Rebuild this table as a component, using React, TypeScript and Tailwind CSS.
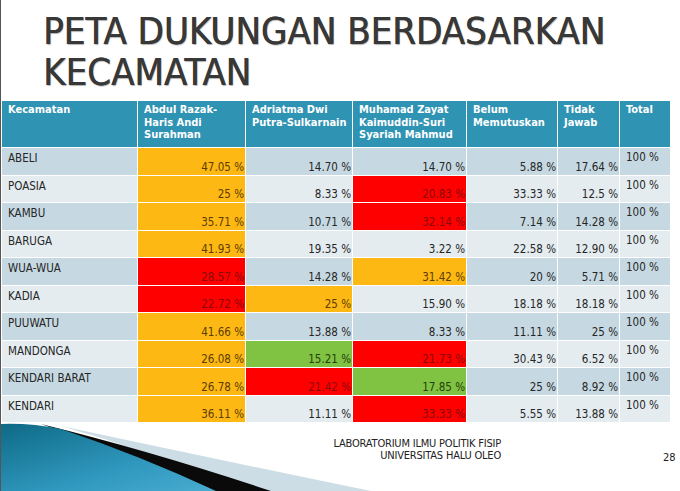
const rows: { name: string; cells: [string, string][] }[] = [
  { name: 'ABELI', cells: [['47.05 %', 'o'], ['14.70 %', ''], ['14.70 %', ''], ['5.88 %', ''], ['17.64 %', '']] },
  { name: 'POASIA', cells: [['25 %', 'o'], ['8.33 %', ''], ['20.83 %', 'r'], ['33.33 %', ''], ['12.5 %', '']] },
  { name: 'KAMBU', cells: [['35.71 %', 'o'], ['10.71 %', ''], ['32.14 %', 'r'], ['7.14 %', ''], ['14.28 %', '']] },
  { name: 'BARUGA', cells: [['41.93 %', 'o'], ['19.35 %', ''], ['3.22 %', ''], ['22.58 %', ''], ['12.90 %', '']] },
  { name: 'WUA-WUA', cells: [['28.57 %', 'r'], ['14.28 %', ''], ['31.42 %', 'o'], ['20 %', ''], ['5.71 %', '']] },
  { name: 'KADIA', cells: [['22.72 %', 'r'], ['25 %', 'o'], ['15.90 %', ''], ['18.18 %', ''], ['18.18 %', '']] },
  { name: 'PUUWATU', cells: [['41.66 %', 'o'], ['13.88 %', ''], ['8.33 %', ''], ['11.11 %', ''], ['25 %', '']] },
  { name: 'MANDONGA', cells: [['26.08 %', 'o'], ['15.21 %', 'g'], ['21.73 %', 'r'], ['30.43 %', ''], ['6.52 %', '']] },
  { name: 'KENDARI BARAT', cells: [['26.78 %', 'o'], ['21.42 %', 'r'], ['17.85 %', 'g'], ['25 %', ''], ['8.92 %', '']] },
  { name: 'KENDARI', cells: [['36.11 %', 'o'], ['11.11 %', ''], ['33.33 %', 'r'], ['5.55 %', ''], ['13.88 %', '']] },
]

const headers = [
  'Kecamatan',
  'Abdul Razak-\nHaris Andi\nSurahman',
  'Adriatma Dwi\nPutra-Sulkarnain',
  'Muhamad Zayat\nKaimuddin-Suri\nSyariah Mahmud',
  'Belum\nMemutuskan',
  'Tidak\nJawab',
  'Total',
]

function cellClass(kind: string, odd: boolean) {
  if (kind === 'o') return 'bg-[#fdb813] text-[#5c3c00]'
  if (kind === 'r') return 'bg-[#fe0000] text-[#8a0a0a]'
  if (kind === 'g') return 'bg-[#80c342] text-[#24400c]'
  return odd ? 'bg-[#c6d9e2] text-[#262626]' : 'bg-[#e4ecf0] text-[#262626]'
}

export default function App() {
  return (
    <div className="relative w-[680px] h-[491px] overflow-hidden bg-white border-l border-[#555]">
      {/* Title */}
      <h1
        className="pl-[42px] pt-[11px] text-[38px] leading-[41px] text-[#383838]"
        style={{
          fontFamily: '"DejaVu Sans Condensed", "DejaVu Sans", sans-serif',
          textShadow: '0.6px 0 0 #383838, 1px 1px 1px rgba(0,0,0,0.3)',
        }}
      >
        PETA DUKUNGAN BERDASARKAN
        <br />
        KECAMATAN
      </h1>

      {/* Table */}
      <div
        className="mt-[8px] ml-[1px] grid grid-cols-[135px_107px_106px_113px_90px_61px_50px] gap-px text-[11.5px]"
        style={{ fontFamily: '"DejaVu Sans Condensed", "DejaVu Sans", sans-serif' }}
      >
        {headers.map((h, i) => (
          <div key={i} className="h-[46px] bg-[#2f93b4] text-white font-bold text-[11px] leading-[12.5px] pl-[6px] pt-[3px] whitespace-pre">
            {h}
          </div>
        ))}
        {rows.map((r, ri) => {
          const odd = ri % 2 === 0
          return [
            <div key={r.name} className={`h-[26.5px] pl-[6px] pt-[2px] ${cellClass('', odd)}`}>{r.name}</div>,
            ...r.cells.map(([v, k], ci) => (
              <div key={r.name + ci} className={`h-[26.5px] flex items-end justify-end pr-[1px] leading-[14px] pb-[1px] ${cellClass(k, odd)}`}>
                {v}
              </div>
            )),
            <div key={r.name + 't'} className={`h-[26.5px] pl-[6px] pt-[1px] ${cellClass('', odd)}`}>100 %</div>,
          ]
        })}
      </div>

      {/* Bottom swoosh */}
      <svg className="absolute left-0 bottom-0" width="400" height="70" viewBox="0 0 400 70">
        <defs>
          <linearGradient id="blu" x1="0" y1="0" x2="1" y2="1">
            <stop offset="0" stopColor="#0e6a86" />
            <stop offset="0.6" stopColor="#2f97bd" />
            <stop offset="1" stopColor="#49acd0" />
          </linearGradient>
        </defs>
        <path d="M60 5 Q200 35 370 70 L240 70 Q150 30 60 5 Z" fill="#cddde5" />
        <path d="M40 3 Q150 30 270 70 L205 70 Q120 30 40 3 Z" fill="#0a0a0a" />
        <path d="M0 3 Q30 2 60 8 Q140 35 215 70 L0 70 Z" fill="url(#blu)" />
      </svg>

      {/* Footer */}
      <div
        className="absolute left-[290px] top-[438px] w-[210px] text-right text-[11px] leading-[12px] text-[#222] tracking-[-0.2px]"
        style={{ fontFamily: '"Liberation Sans Narrow", "DejaVu Sans Condensed", sans-serif' }}
      >
        <div>LABORATORIUM ILMU POLITIK FISIP</div>
        <div>UNIVERSITAS HALU OLEO</div>
      </div>
      <div
        className="absolute left-[662px] top-[450px] text-[11px] text-[#222]"
        style={{ fontFamily: '"Liberation Sans Narrow", "DejaVu Sans Condensed", sans-serif' }}
      >
        28
      </div>
    </div>
  )
}
